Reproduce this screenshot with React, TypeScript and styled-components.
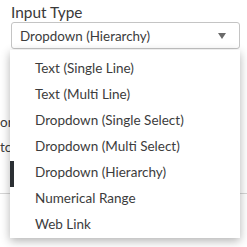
import React from "react";
import styled, { createGlobalStyle } from "styled-components";

const options = [
  "Text (Single Line)",
  "Text (Multi Line)",
  "Dropdown (Single Select)",
  "Dropdown (Multi Select)",
  "Dropdown (Hierarchy)",
  "Numerical Range",
  "Web Link",
];

const GlobalStyle = createGlobalStyle`
  html, body {
    margin: 0;
    padding: 0;
    background: #ffffff;
    overflow: hidden;
  }
  body {
    font-family: "Lato", "Open Sans", sans-serif;
    color: #333333;
  }
`;

const App: React.FC = () => {
  return (
    <>
      <GlobalStyle />
      <Panel>
        <Field>
          <Label>Input Type</Label>
          <SelectWrap>
            <SelectBox>
              <span>Dropdown (Hierarchy)</span>
              <Caret />
            </SelectBox>
            <Menu>
              {options.map((opt) => (
                <Option key={opt}>{opt}</Option>
              ))}
            </Menu>
          </SelectWrap>
        </Field>
        <Behind>
          <BehindRow>or</BehindRow>
          <BehindRow>tc</BehindRow>
          <ButtonRow>
            <DarkButton />
          </ButtonRow>
          <Divider />
        </Behind>
      </Panel>
    </>
  );
};

const Panel = styled.div`
  width: 247px;
  height: 247px;
  box-sizing: border-box;
  padding-top: 2px;
`;

const Field = styled.div`
  padding: 0 7px 0 11px;
  display: flex;
  flex-flow: column nowrap;
`;

const Label = styled.div`
  font-size: 15.4px;
  line-height: 20px;
  color: #3a3a3a;
`;

const SelectWrap = styled.div`
  position: relative;
`;

const SelectBox = styled.div`
  height: 27px;
  box-sizing: border-box;
  border: 1px solid #c4c4c4;
  border-radius: 3px;
  display: flex;
  align-items: center;
  justify-content: space-between;
  padding: 0 13px 0 8px;
  font-size: 13.4px;
  color: #3c3c3c;
  background: #ffffff;
`;

const Caret = styled.span`
  width: 0;
  height: 0;
  border-left: 4px solid transparent;
  border-right: 4px solid transparent;
  border-top: 6px solid #6a6a6a;
`;

const Menu = styled.div`
  position: absolute;
  top: 28px;
  left: -1px;
  width: 230px;
  height: 188px;
  box-sizing: border-box;
  background: #ffffff;
  box-shadow: 0 3px 9px rgba(0, 0, 0, 0.3);
  padding-top: 6px;
  z-index: 2;
`;

const Option = styled.div`
  height: 26px;
  line-height: 25px;
  padding-left: 25px;
  font-size: 13.5px;
  color: #3c3c3c;
  white-space: nowrap;
`;

const Behind = styled.div`
  margin-top: 61px;
  display: flex;
  flex-flow: column nowrap;
`;

const BehindRow = styled.div`
  height: 25px;
  line-height: 25px;
  font-size: 13.5px;
  color: #3c3c3c;
  white-space: nowrap;
`;

const ButtonRow = styled.div`
  height: 32px;
  display: flex;
  align-items: flex-start;
  padding-top: 1px;
  padding-left: 10px;
`;

const DarkButton = styled.div`
  position: relative;
  z-index: 3;
  width: 4px;
  height: 26px;
  background: #2b2f33;
`;

const Divider = styled.div`
  height: 1px;
  background: #d6d6d6;
  width: 247px;
`;

export default App;
